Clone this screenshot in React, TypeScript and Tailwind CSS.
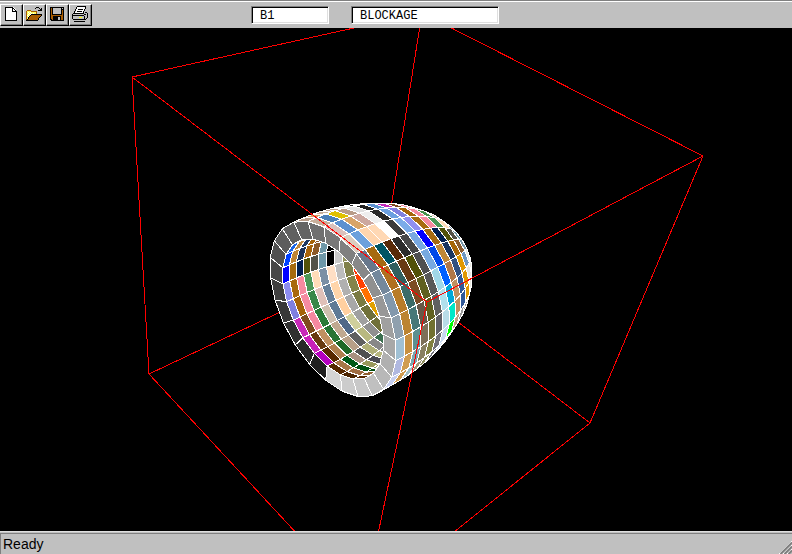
import { ReactNode } from "react";

type Point = [number, number];

const SEGMENTS = 24;
const CENTER: Point = [333, 309];
const AXIS: Point = [0.9, -0.433];
const RIM_U: Point = [-25, -87.5];
const RIM_V: Point = [-58, -9];

// Cell colours, one row per segment round the axis, front rim first
const outerColors: Record<number, string[]> = {
  0: ["#b89c88", "#d8a468", "#c8b09c", "#b89c88", "#dddddd", "#202020", "#4c80b8", "#c028b8", "#a56408", "#f58aa0"],
  13: ["#c8c8f0", "#d8a860"],
  14: ["#c8d0f0", "#d09c50", "#a0c0c8", "#a09878", "#909060", "#707078", "#c8d8f0", "#00ff00"],
  15: ["#b0b8e0", "#d09c50", "#78a8b0", "#888060", "#808040", "#707078", "#c8d8f0", "#00ff00", "#c0a080"],
  16: ["#a0c0d4", "#c89040", "#5c9090", "#7c7058", "#707030", "#606068", "#b8dce8", "#00e8c8", "#c09060", "#305898", "#e09800"],
  17: ["#8fa0ae", "#bc8430", "#487878", "#685848", "#606020", "#606060", "#b0e0ec", "#00a8d8", "#c09060", "#305898", "#e09800"],
  18: ["#8298ac", "#b87c28", "#3c6c68", "#7c4c24", "#606020", "#585858", "#a0d8e8", "#0060ff", "#b07848", "#305080", "#e09800", "#7098c0"],
  19: ["#74889c", "#b07020", "#306060", "#683a14", "#525208", "#505050", "#78aae0", "#0048e8", "#c08838", "#183460", "#a66408", "#8c5c30", "#7898a8"],
  20: ["#68788c", "#a66a10", "#005564", "#582a08", "#2c2c2c", "#484848", "#78a8e0", "#0000ff", "#a66a10", "#001e50", "#525208", "#525248", "#6f98a8"],
  21: ["#dccdbf", "#6ca0dc", "#ffd5ae", "#ffd8b4", "#ffffff", "#3c3c3c", "#7cace8", "#9090f0", "#a86c10", "#f58aa0", "#4c9858", "#ffdcb8", "#7a8fa5"],
  22: ["#dcc0bc", "#5c90d0", "#d8a468", "#cca8a0", "#eeeeee", "#282828", "#6ca0e0", "#8080e0", "#a56408", "#f58aa0", "#48904c", "#dfc0b8", "#8090a0"],
  23: ["#c8b09c", "#4c80b8", "#e0c000", "#b89c88", "#e0e0e0", "#202020", "#5c90d0", "#c028b8", "#7f4c1f", "#f588a0", "#388848"],
};

const innerColors: Record<number, string[]> = {
  0: ["#bd8638", "#a66408", "#8a5828", "#6f98a8"],
  1: ["#00c8e0", "#c08a40", "#1c3258", "#a66408", "#8a5828", "#6f98a8", "#000000"],
  2: ["#1a66e8", "#c08a40", "#20385f", "#a66408", "#8a5828", "#6f98a8", "#000000", "#c8c8c8"],
  3: ["#0040ff", "#bf8535", "#1c3258", "#a8640a", "#8c5a28", "#6f98a8", "#000000", "#c8c8c8", "#92925e"],
  4: ["#0000ff", "#a66a0e", "#001e50", "#525208", "#525248", "#6f98a8", "#000000", "#c8c8c8", "#92925e", "#ff0000", "#ff3300"],
  5: ["#8c8cf0", "#a8690d", "#f58aa0", "#4c9858", "#ffdcb8", "#7a8fa5", "#ffdfc5", "#bdbdbd", "#80804a", "#ff3300", "#ff4000"],
  6: ["#7f7fe0", "#a56208", "#f58aa0", "#388848", "#dfc0b8", "#66809a", "#ffd5aa", "#b0b0b0", "#84844a", "#ff4000", "#ff7000"],
  7: ["#c828b8", "#7f4c1f", "#f588a0", "#2c7a38", "#cfbfae", "#5f7a95", "#ffd0a0", "#a8a8a8", "#7a7a42", "#ff7000", "#e0a000"],
  8: ["#c820b8", "#683a10", "#c09060", "#287434", "#c0a890", "#506888", "#cfcf9c", "#a0a0a0", "#70703a", "#e0a000"],
  9: ["#b400c0", "#582800", "#b08050", "#206828", "#b8a088", "#606060", "#b8b880", "#909090", "#70703a"],
  10: ["#552800", "#a87848", "#005818", "#a89080", "#505050", "#b0b078", "#888888", "#3c7050"],
  11: ["#4c2400", "#a06c40", "#005010", "#98985a", "#4c4c54", "#b8b880", "#888888"],
  12: ["#582800", "#906030", "#004c10", "#98985a", "#505050", "#a0a060"],
  13: ["#683810", "#8c5c28", "#004c10", "#888850"],
  14: ["#7c4c24", "#a06c40", "#005010"],
};

const rimColors = [
  "#646464", "#606060", "#5c5c5c", "#505050", "#484848", "#404040", "#383838", "#303030",
  "#282828", "#202020", "#d4d4d4", "#cccccc", "#c8c8c8", "#c0c0c0", "#b8b8b8", "#b0b0b0",
  "#a8a8a8", "#a0a0a0", "#989898", "#909090", "#888888", "#808080", "#787878", "#707070",
];

const cubeBack: [Point, Point][] = [
  [[382, 264], [422, 13]],
  [[382, 264], [149, 374]],
  [[382, 264], [590, 423]],
];

const cubeFront: [Point, Point][] = [
  [[132, 77], [422, 13]],
  [[703, 156], [422, 13]],
  [[132, 77], [149, 374]],
  [[703, 156], [590, 423]],
  [[149, 374], [363, 605]],
  [[590, 423], [363, 605]],
  [[427, 302], [132, 77]],
  [[427, 302], [703, 156]],
  [[427, 302], [363, 605]],
];

// A point on a half ellipsoid, `depth` along the axis and `seg` steps round it
function surfacePoint(seg: number, depth: number, length: number, scale: number): Point {
  const a = (seg * 2 * Math.PI) / SEGMENTS;
  const r = scale * Math.sqrt(Math.max(0, 1 - (depth / length) ** 2));
  return [
    CENTER[0] + depth * AXIS[0] + r * (RIM_U[0] * Math.cos(a) + RIM_V[0] * Math.sin(a)),
    CENTER[1] + depth * AXIS[1] + r * (RIM_U[1] * Math.cos(a) + RIM_V[1] * Math.sin(a)),
  ];
}

function signedArea(pts: Point[]) {
  return pts.reduce((sum, [x, y], i) => {
    const [nx, ny] = pts[(i + 1) % pts.length];
    return sum + x * ny - nx * y;
  }, 0);
}

function buildShell(
  colors: Record<number, string[]>,
  rings: number,
  step: number,
  length: number,
  scale: number,
  facing: number,
) {
  const cells: { pts: Point[]; fill: string }[] = [];
  for (let k = rings - 1; k >= 0; k--) {
    for (let s = 0; s < SEGMENTS; s++) {
      const pts = [
        surfacePoint(s, k * step, length, scale),
        surfacePoint(s + 1, k * step, length, scale),
        surfacePoint(s + 1, (k + 1) * step, length, scale),
        surfacePoint(s, (k + 1) * step, length, scale),
      ];
      if (signedArea(pts) * facing > 0) {
        cells.push({ pts, fill: colors[s]?.[k] ?? (k > 10 ? "#e8e8e0" : "#9a9a9a") });
      }
    }
  }
  return cells;
}

const innerCells = buildShell(innerColors, 13, 7.3, 112, 0.8, -1);
const outerCells = buildShell(outerColors, 14, 9.8, 138, 1, 1);
const rimCells = rimColors.map((fill, s) => ({
  fill,
  pts: [
    surfacePoint(s, 0, 1, 1),
    surfacePoint(s + 1, 0, 1, 1),
    surfacePoint(s + 1, 0, 1, 0.8),
    surfacePoint(s, 0, 1, 0.8),
  ],
}));

function Edges({ lines }: { lines: [Point, Point][] }) {
  return (
    <g stroke="#ff0000">
      {lines.map(([a, b], i) => (
        <line key={i} x1={a[0]} y1={a[1]} x2={b[0]} y2={b[1]} />
      ))}
    </g>
  );
}

function Viewport() {
  return (
    <svg
      viewBox="0 28 792 503"
      shapeRendering="crispEdges"
      className="block h-full w-full"
      role="img"
      aria-label="Blockage geometry"
    >
      <Edges lines={cubeBack} />
      <g stroke="#ffffff">
        {[...innerCells, ...outerCells, ...rimCells].map(({ pts, fill }, i) => (
          <polygon key={i} points={pts.map((p) => p.join(",")).join(" ")} fill={fill} />
        ))}
      </g>
      <Edges lines={cubeFront} />
    </svg>
  );
}

function ToolButton({ label, children }: { label: string; children: ReactNode }) {
  return (
    <button
      type="button"
      aria-label={label}
      className="flex h-[22px] w-[23px] items-center justify-center border border-t-white border-l-white border-r-black border-b-black bg-[#c0c0c0] pr-0.5 pb-0.5 shadow-[inset_-1px_-1px_0_#808080]"
    >
      <svg width="18" height="16" viewBox="0 0 18 16" shapeRendering="crispEdges">
        {children}
      </svg>
    </button>
  );
}

function Field({ label, value, width }: { label: string; value: string; width: string }) {
  return (
    <input
      aria-label={label}
      defaultValue={value}
      className={`h-[18px] ${width} border border-t-[#808080] border-l-[#808080] border-r-white border-b-white bg-white pl-2 pt-0.5 font-['Liberation_Mono',monospace] text-xs text-black shadow-[inset_1px_1px_0_#000,inset_-1px_-1px_0_#dfdfdf] outline-none`}
    />
  );
}

export default function App() {
  return (
    <div className="flex h-screen flex-col bg-[#c0c0c0] font-['Liberation_Sans',Arial,sans-serif]">
      <header className="flex h-7 shrink-0 items-center border-t border-[#808080] shadow-[inset_0_1px_0_#fff]">
        <div className="flex w-[251px] pt-px">
          <ToolButton label="New">
            <path d="M4 1h7l3 3v10H4z" fill="#fff" />
            <path d="M4 1h7v1H4zM3 1h1v13H3zM4 14h10v1H3v-1zM14 5h1v10h-1zM11 2h1v1h-1zM12 3h1v1h-1zM13 4h1v1h-1zM10 2h1v3h3v1h-4z" fill="#000" />
          </ToolButton>
          <ToolButton label="Open">
            <path d="M2 5h4v1h5v3H6l-4 5z" fill="#ffff60" />
            <path d="M3 6h1v1H3zM5 6h1v1H5zM4 7h1v1H4zM6 7h1v1H6zM8 7h1v1H8zM3 8h1v1H3zM5 8h1v1H5zM2 9h1v1H2zM3 10h1v1H3z" fill="#fff" />
            <path d="M6 9h11l-4 5H2z" fill="#a85c00" />
            <path d="M6 8h11v1H6zM16 9h1v1h-1zM15 10h1v1h-1zM14 11h1v1h-1zM13 12h1v2h-1zM1 14h12v1H1zM5 9h1v1H5zM4 10h1v1H4zM3 11h1v2H3zM2 13h1v1H2zM10 2h1v1h-1zM11 1h3v1h-3zM14 2h1v1h-1zM15 3h1v1h-1zM13 4h4v1h-4zM16 2h1v2h-1z" fill="#000" />
            <path d="M2 4h4v1H2zM1 5h1v9H1zM6 5h6v1H6zM11 6h1v2h-1z" fill="#a85c00" />
          </ToolButton>
          <ToolButton label="Save">
            <path d="M2 1h14v14H3l-1-1z" fill="#000" />
            <path d="M3 2h1v11H3zM14 4h1v10h-1zM4 9h10v1H4zM4 9h1v5H4zM13 9h1v5h-1z" fill="#a85c00" />
            <path d="M5 2h8v6H5zM14 2h1v1h-1zM10 11h2v3h-2z" fill="#c0c0c0" />
          </ToolButton>
          <ToolButton label="Print">
            <path d="M6 1h9l-3 7H4z" fill="#fff" />
            <path d="M1 8h13l2-2v6l-3 3H3l-2-2z" fill="#c0c0c0" />
            <path d="M6 0h9v1H6zM5 1h1v2H5zM4 3h1v2H4zM3 5h1v2H3zM14 1h1v2h-1zM13 3h1v2h-1zM12 5h1v2h-1zM7 3h5v1H7zM6 5h5v1H6zM2 7h11v1H2zM1 8h1v5H1zM13 8h1v1h-1zM14 6h2v1h-2zM16 7h1v5h-1zM15 12h1v1h-1zM14 13h1v1h-1zM2 13h12v1H2zM3 15h11v1H3zM2 9h11v1H2zM14 8h1v1h-1zM13 10h1v3h-1z" fill="#000" />
            <path d="M8 11h3v1H8z" fill="#ffff00" />
          </ToolButton>
        </div>
        <div className="flex gap-[22px] pt-px">
          <Field label="Block ID" value="B1" width="w-[78px]" />
          <Field label="Block type" value="BLOCKAGE" width="w-[148px]" />
        </div>
      </header>

      <main className="min-h-0 flex-1 bg-black">
        <Viewport />
      </main>

      <footer className="flex h-[23px] shrink-0 items-end justify-between border-t border-[#dfdfdf]">
        <div className="flex h-[21px] flex-1 items-start justify-between border-t border-l border-[#808080] pl-0.5">
          <span className="text-sm leading-5 text-black">Ready</span>
          <svg width="13" height="13" viewBox="0 0 13 13" className="self-end" aria-hidden="true">
            <path d="M0 13L13 0M4 13l9-9M8 13l5-5" stroke="#fff" />
            <path d="M1.5 13L13 1.5M5.5 13L13 5.5M9.5 13L13 9.5" stroke="#808080" strokeWidth="2" />
          </svg>
        </div>
      </footer>
    </div>
  );
}
